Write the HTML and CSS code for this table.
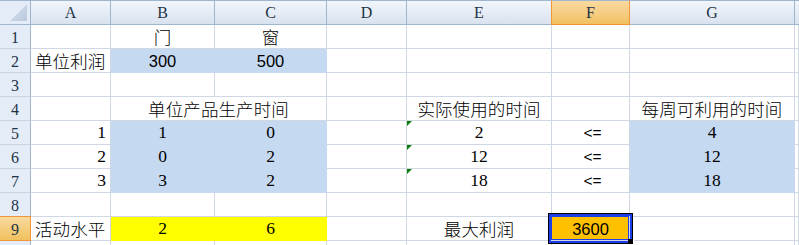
FILE: index.html
```html
<!DOCTYPE html>
<html lang="zh">
<head>
<meta charset="utf-8">
<title>Sheet</title>
<link rel="stylesheet" href="styles.css">
</head>
<body>
<div class="sheet">
  <div class="ch corner"><svg class="tri" width="17" height="17" viewBox="0 0 17 17"><defs><linearGradient id="tg" x1="0" y1="0" x2="1" y2="1"><stop offset="0" stop-color="#d9e2ee"/><stop offset="1" stop-color="#b9c9dc"/></linearGradient></defs><polygon points="17,0 17,17 0,17" fill="url(#tg)"/></svg></div>
  <div class="ch">A</div><div class="ch">B</div><div class="ch">C</div><div class="ch">D</div><div class="ch">E</div><div class="ch sel">F</div><div class="ch">G</div><div class="ch last"></div>

  <div class="rh">1</div><div class="c"></div><div class="c ctr cjk">门</div><div class="c ctr cjk">窗</div><div class="c"></div><div class="c"></div><div class="c"></div><div class="c"></div><div class="c"></div>

  <div class="rh">2</div><div class="c cjk lft">单位利润</div><div class="c ctr sans blue">300</div><div class="c ctr sans blue">500</div><div class="c"></div><div class="c"></div><div class="c"></div><div class="c"></div><div class="c"></div>

  <div class="rh">3</div><div class="c"></div><div class="c"></div><div class="c"></div><div class="c"></div><div class="c"></div><div class="c"></div><div class="c"></div><div class="c"></div>

  <div class="rh">4</div><div class="c"></div><div class="c ctr cjk span2">单位产品生产时间</div><div class="c"></div><div class="c ctr cjk">实际使用的时间</div><div class="c"></div><div class="c ctr cjk">每周可利用的时间</div><div class="c"></div>

  <div class="rh">5</div><div class="c rgt serif">1</div><div class="c ctr serif blue">1</div><div class="c ctr serif blue">0</div><div class="c"></div><div class="c ctr serif err">2</div><div class="c ctr sans op">&lt;=</div><div class="c ctr serif blue">4</div><div class="c"></div>

  <div class="rh">6</div><div class="c rgt serif">2</div><div class="c ctr serif blue">0</div><div class="c ctr serif blue">2</div><div class="c"></div><div class="c ctr serif err">12</div><div class="c ctr sans op">&lt;=</div><div class="c ctr serif blue">12</div><div class="c"></div>

  <div class="rh">7</div><div class="c rgt serif">3</div><div class="c ctr serif blue">3</div><div class="c ctr serif blue">2</div><div class="c"></div><div class="c ctr serif err">18</div><div class="c ctr sans op">&lt;=</div><div class="c ctr serif blue">18</div><div class="c"></div>

  <div class="rh">8</div><div class="c"></div><div class="c"></div><div class="c"></div><div class="c"></div><div class="c"></div><div class="c"></div><div class="c"></div><div class="c"></div>

  <div class="rh sel">9</div><div class="c cjk lft">活动水平</div><div class="c ctr serif yellow">2</div><div class="c ctr serif yellow">6</div><div class="c"></div><div class="c ctr cjk">最大利润</div><div class="c ctr sans orange active">3600<span class="handle"></span></div><div class="c"></div><div class="c"></div>

  <div class="rh"></div><div class="c"></div><div class="c"></div><div class="c"></div><div class="c"></div><div class="c"></div><div class="c"></div><div class="c"></div><div class="c"></div>
</div>
</body>
</html>
```
FILE: styles.css
```css
html, body {
  margin: 0;
  padding: 0;
  background: #ffffff;
  overflow: hidden;
}
.sheet {
  display: grid;
  grid-template-columns: 31px 80px 104px 112px 80px 145px 78px 165px 1fr;
  grid-template-rows: 25px repeat(10, 24px);
  width: 799px;
  height: 245px;
  overflow: hidden;
  color: #000;
}
.ch {
  box-sizing: border-box;
  border-top: 1px solid #9eb6ce;
  border-right: 1px solid #9eb6ce;
  border-bottom: 1px solid #9eb6ce;
  background: linear-gradient(#f1f5fb, #e6ecf5 50%, #d8e2ee);
  font-family: "Liberation Serif", serif;
  font-size: 16px;
  color: #1e3447;
  display: flex;
  align-items: center;
  justify-content: center;
  padding-top: 1px;
}
.ch.corner {
  background: #e4ecf7;
  position: relative;
}
.ch.corner .tri {
  position: absolute;
  right: 3px;
  bottom: 3px;
}
.ch.sel {
  background: linear-gradient(#f9d99e, #f6cd85 50%, #f1c15f);
  border-color: #f29536;
  border-top-color: #9eb6ce;
  position: relative;
  z-index: 1;
  margin-left: -1px;
  border-left: 1px solid #f29536;
}
.ch.last {
  border-right: none;
}
.rh {
  box-sizing: border-box;
  border-right: 1px solid #9eb6ce;
  border-bottom: 1px solid #c5d3e3;
  background: #e4ecf7;
  font-family: "Liberation Serif", serif;
  font-size: 16px;
  color: #1e3447;
  display: flex;
  align-items: center;
  justify-content: center;
  padding-top: 2px;
}
.rh.sel {
  background: linear-gradient(#f9d99e, #f1c15f);
  border: 1px solid #f29536;
  border-left: none;
  margin-top: -1px;
  height: 25px;
}
.c {
  box-sizing: border-box;
  border-right: 1px solid #d0d7e5;
  border-bottom: 1px solid #d0d7e5;
  display: flex;
  align-items: flex-end;
  white-space: nowrap;
  overflow: visible;
  padding-bottom: 1px;
}
.ctr { justify-content: center; }
.lft { justify-content: flex-start; padding-left: 4px; }
.rgt { justify-content: flex-end; padding-right: 4px; }
.span2 { grid-column: span 2; }
.cjk {
  font-family: "Noto Sans CJK SC", sans-serif;
  font-size: 17.5px;
  line-height: 21px;
  letter-spacing: 0.1px;
  font-weight: 300;
}
.serif {
  font-family: "Liberation Serif", serif;
  font-size: 17.5px;
  line-height: 21px;
}
.sans {
  font-family: "Liberation Sans", sans-serif;
  font-size: 16.5px;
  line-height: 20px;
  padding-bottom: 1px;
}
.op { padding-left: 4px; font-size: 15.5px; }
.blue {
  background: #c5d9f1;
  border-color: #c5d9f1;
}
.yellow {
  background: #ffff00;
  border-color: #ffff00;
}
.orange {
  background: #ffc000;
}
.err {
  position: relative;
}
.err::before {
  content: "";
  position: absolute;
  left: 0;
  top: 0;
  border-top: 5px solid #0b7a0b;
  border-right: 5px solid transparent;
}
.active {
  position: relative;
  outline: 2px solid #1c3ee6;
  outline-offset: 0px;
  box-shadow: inset 0 0 0 1px #1c3ee6, 0 0 0 3px #000000;
  z-index: 2;
  margin: -1px 0 0 -1px;
  padding-left: 1px;
}
.handle {
  position: absolute;
  right: -5px;
  bottom: -5px;
  width: 5px;
  height: 5px;
  background: #000;
  border: 1px solid #fff;
  border-top: none;
  border-left: none;
}
```
